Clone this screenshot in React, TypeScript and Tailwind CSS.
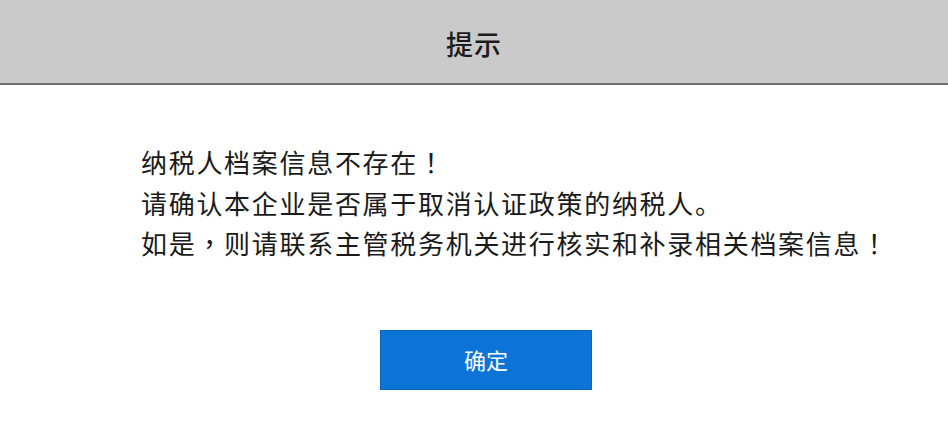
import React from "react";

const P = ({ c }: { c: string }) => (
  <span style={{ fontFamily: '"Noto Sans CJK TC", "Noto Sans CJK SC", sans-serif' }}>{c}</span>
);

export default function App() {
  return (
    <div
      className="w-[948px] h-[442px] bg-white flex flex-col overflow-hidden"
      style={{ fontFamily: '"Noto Sans CJK SC", "Noto Sans", sans-serif' }}
    >
      <div className="h-[85px] shrink-0 bg-[#cbcaca] border-b-2 border-[#6f6f6f] flex items-center justify-center">
        <span className="text-[27px] text-[#1c1c1c] font-medium tracking-[1px] leading-none pt-[3px]">提示</span>
      </div>
      <div className="flex flex-col pl-[141px] pt-[57px]">
        <div className="text-[26px] leading-[40.5px] tracking-[1.7px] text-[#1a1a1a]">
          <div>
            纳税人档案信息不存在<P c="！" />
          </div>
          <div>请确认本企业是否属于取消认证政策的纳税人。</div>
          <div>
            如是<P c="，" />则请联系主管税务机关进行核实和补录相关档案信息<P c="！" />
          </div>
        </div>
      </div>
      <div className="flex justify-center pt-[66px] pl-[24px]">
        <button className="w-[212px] h-[60px] bg-[#0b74d6] border border-[#0a63b8] text-white text-[22px] flex items-center justify-center">
          确定
        </button>
      </div>
    </div>
  );
}
